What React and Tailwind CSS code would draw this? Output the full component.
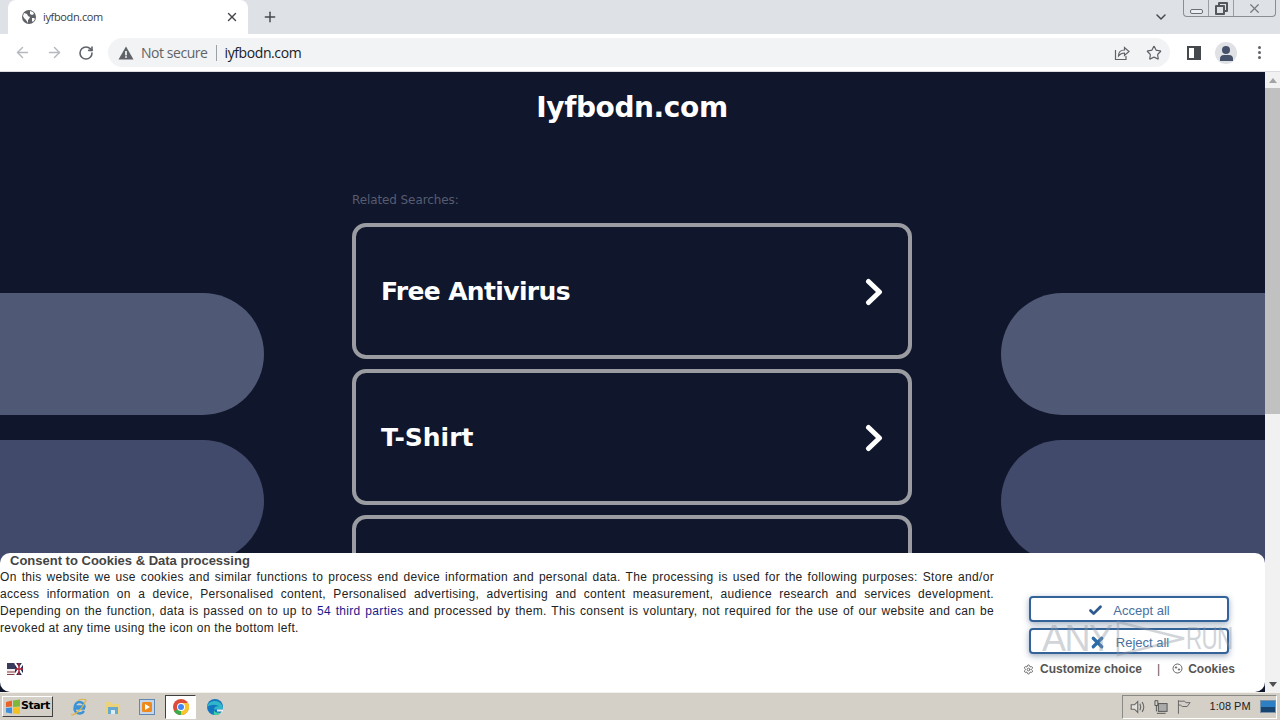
import React from 'react';
import { ArrowLeft, ArrowRight, RotateCw, X, Plus, ChevronDown, Star, Check, Settings } from 'lucide-react';

const uiFont = 'font-["Open_Sans",sans-serif]';
const verdana = 'font-["DejaVu_Sans",sans-serif]';

const Globe = () => (
  <svg width="16" height="16" viewBox="0 0 16 16" className="shrink-0">
    <circle cx="8" cy="8" r="7" fill="#5f6368" />
    <path d="M3 4l3 1 1 2 2 1-1 2-1 1v3l-2-3-2-2-1-2zM9 2l3 1 1 2-2 1-2-1zM11 9l2 0 1 1-2 3-1-1z" fill="#fff" />
  </svg>
);

const Warning = () => (
  <svg width="16" height="14" viewBox="0 0 16 14">
    <path d="M8 0.5L15.5 13.5H0.5Z" fill="#5f6368" />
    <rect x="7.2" y="5" width="1.6" height="4.4" fill="#fff" />
    <rect x="7.2" y="10.2" width="1.6" height="1.6" fill="#fff" />
  </svg>
);

const ShareIcon = () => (
  <svg width="16" height="16" viewBox="0 0 16 16" fill="none" stroke="#5f6368" strokeWidth="1.2">
    <path d="M1.500 5v9.500h10.500V11" />
    <path d="M4.500 11c0-4 2.500-6 6-6V2.500L15 6.500l-4.500 4V8c-3 0-4.500 1-6 3z" />
  </svg>
);

const TabBarRow = () => (
  <div className="h-[34px] bg-[#dee1e6] flex items-end pl-2 shrink-0">
    <div className={`w-[240px] h-[34px] bg-white rounded-t-lg flex items-center pl-[13px] pr-[9px] ${uiFont}`}>
      <Globe />
      <span className="ml-[6px] text-[11px] tracking-[-0.35px] text-[#3c4043] flex-1">iyfbodn.com</span>
      <X size={14} strokeWidth={2.4} color="#45484c" />
    </div>
    <div className="ml-[14px] h-[34px] flex items-center">
      <Plus size={16} strokeWidth={2.2} color="#45484c" />
    </div>
    <div className="ml-auto self-start flex items-center pt-[9px] pr-[14px]">
      <ChevronDown size={16} strokeWidth={2.2} color="#45484c" />
    </div>
    <div className="self-start flex w-[93px] h-[17px] mr-[4px] border border-t-0 border-[#8a8d92] rounded-b-[4px]">
      <div className="w-[25px] flex items-center justify-center border-r border-[#9a9da2]">
        <div className="w-[13px] h-[5px] mt-[6px] border border-[#6b6e73] rounded-[2px] bg-[#eceef1]" />
      </div>
      <div className="w-[25px] flex items-center justify-center border-r border-[#9a9da2]">
        <div className="relative w-[13px] h-[13px]">
          <div className="w-[10px] h-[10px] border-2 border-[#55585c] rounded-[1px] ml-[3px]" />
          <div className="absolute left-0 bottom-0 w-[10px] h-[10px] border-2 border-[#55585c] rounded-[1px] bg-[#dee1e6]" />
        </div>
      </div>
      <div className="flex-1 flex items-center justify-center">
        <X size={15} strokeWidth={2} color="#77797e" />
      </div>
    </div>
  </div>
);

const Toolbar = () => (
  <div className={`h-[38px] bg-white border-b border-[#dadce0] flex items-center shrink-0 ${uiFont}`}>
    <div className="w-[108px] flex items-center pl-[14px] gap-[15px]">
      <ArrowLeft size={17} color="#b5b8bc" strokeWidth={2} />
      <ArrowRight size={17} color="#b5b8bc" strokeWidth={2} />
      <RotateCw size={16} color="#5f6368" strokeWidth={2.4} />
    </div>
    <div className="w-[1062px] h-[29px] bg-[#f1f3f4] rounded-full flex items-center pl-[10px] pr-[8px]">
      <Warning />
      <span className="ml-[7px] text-[14px] tracking-[-0.45px] text-[#5f6368]">Not secure</span>
      <span className="mx-[8px] w-px h-[16px] bg-[#9aa0a6]" />
      <span className="text-[14px] tracking-[-0.4px] text-[#202124]">iyfbodn.com</span>
      <div className="ml-auto flex items-center gap-[16px]">
        <ShareIcon />
        <Star size={16} color="#5f6368" strokeWidth={1.8} />
      </div>
    </div>
    <div className="flex-1 flex items-center pl-[17px]">
      <div className="w-[14px] h-[14px] border-2 border-[#45484c] flex justify-end">
        <div className="w-[5px] h-full bg-[#45484c]" />
      </div>
      <div className="ml-[14px] w-[22px] h-[22px] rounded-full bg-[#dfe1e5] flex flex-col items-center justify-end overflow-hidden">
        <div className="w-[8px] h-[8px] rounded-full bg-[#45506a]" />
        <div className="w-[13px] h-[6px] mb-[3px] mt-[1px] rounded-t-[4px] bg-[#45506a]" />
      </div>
      <div className="ml-[21px] flex flex-col gap-[2px]">
        <div className="w-[3px] h-[3px] rounded-full bg-[#5f6368]" />
        <div className="w-[3px] h-[3px] rounded-full bg-[#5f6368]" />
        <div className="w-[3px] h-[3px] rounded-full bg-[#5f6368]" />
      </div>
    </div>
  </div>
);

const Pills = ({ side }) => (
  <div className={`w-[264px] pt-[221px] flex flex-col gap-[25px] shrink-0 ${side === 'left' ? '' : 'ml-auto'}`}>
    <div className={`h-[122px] bg-[#4f5875] ${side === 'left' ? 'rounded-r-[61px]' : 'rounded-l-[61px]'}`} />
    <div className={`h-[122px] bg-[#424a6b] ${side === 'left' ? 'rounded-r-[61px]' : 'rounded-l-[61px]'}`} />
  </div>
);

const SearchCard = ({ label, tight }) => (
  <div className="h-[136px] shrink-0 border-4 border-[#9b9ca2] rounded-[14px] flex items-center justify-between pt-[2px] pl-[25px] pr-[24px]">
    <span className={`text-[25px] font-bold text-white ${verdana} ${tight ? 'tracking-[-0.65px]' : ''}`}>{label}</span>
    <svg width="20" height="28" viewBox="0 0 20 28" fill="none" stroke="#fff" strokeWidth="5" strokeLinecap="round" strokeLinejoin="round">
      <path d="M4.500 3.500L15.500 14L4.500 24.500" />
    </svg>
  </div>
);

const ParkedPage = () => (
  <div className="flex-1 flex bg-[#10162b] overflow-hidden">
    <Pills side="left" />
    <div className={`w-[560px] ml-[88px] flex flex-col shrink-0 ${verdana}`}>
      <h1 className="text-[28px] tracking-[-0.4px] font-bold text-white text-center leading-[34px] mt-[19px]">Iyfbodn.com</h1>
      <p className="text-[12px] tracking-[-0.1px] text-[#565c71] mt-[67px] leading-[16px]">Related Searches:</p>
      <div className="flex flex-col gap-[10px] mt-[15px]">
        <SearchCard label="Free Antivirus" tight />
        <SearchCard label="T-Shirt" />
        {/* third result sits behind the consent bar */}
        <div className="h-[136px] shrink-0 border-4 border-[#9b9ca2] rounded-[14px]" />
      </div>
    </div>
    <Pills side="right" />
  </div>
);

const Scrollbar = () => (
  <div className="w-[15px] bg-[#f1f1f1] flex flex-col items-center shrink-0">
    <div className="h-[16px] flex items-center justify-center">
      <div className="w-0 h-0 border-x-[4px] border-x-transparent border-b-[5px] border-b-[#a3a3a3]" />
    </div>
    <div className="w-full h-[326px] bg-[#c1c1c1]" />
    <div className="mt-auto h-[16px] flex items-center justify-center">
      <div className="w-0 h-0 border-x-[4px] border-x-transparent border-t-[5px] border-t-[#505050]" />
    </div>
  </div>
);

const ConsentButton = ({ icon, label }) => (
  <div className="w-[200px] h-[26px] bg-white border-2 border-[#34639a] rounded-[4px] shadow-[0_2px_6px_rgba(40,70,110,0.45)] flex items-center justify-center gap-[10px] pt-[3px] text-[13px] text-[#47709f]">
    {icon}
    <span>{label}</span>
  </div>
);

const ConsentBar = () => (
  <div className={`absolute left-0 right-0 bottom-0 h-[139px] bg-white rounded-[10px] flex font-["Liberation_Sans",sans-serif]`}>
    <div className="w-[994px] shrink-0 flex flex-col">
      <h2 className="pl-[10px] -mt-[1px] text-[13px] font-bold text-[#444] leading-[17px]">Consent to Cookies &amp; Data processing</h2>
      <p className="text-[12px] text-[#222] leading-[17px] text-justify tracking-[0.32px]">
        On this website we use cookies and similar functions to process end device information and personal data. The processing is used for the following purposes: Store and/or access information on a device, Personalised content, Personalised advertising, advertising and content measurement, audience research and services development. Depending on the function, data is passed on to up to <span className="text-[#1a1a8c]">54 third parties</span> and processed by them. This consent is voluntary, not required for the use of our website and can be revoked at any time using the icon on the bottom left.
      </p>
      <svg width="16" height="12" viewBox="0 0 16 12" className="ml-[7px] mt-[26px]">
        <rect width="8" height="12" fill="#f0eeee" />
        <path d="M0 1h8M0 5h8M0 9h8M0 11.500h8" stroke="#8c3a44" strokeWidth="1.200" />
        <rect width="8" height="6" fill="#3a3a5c" />
        <rect x="8" width="8" height="12" fill="#1d2a55" />
        <path d="M8 0l8 12M16 0l-8 12" stroke="#fff" strokeWidth="2" />
        <path d="M12 0v12M8 6h8" stroke="#b8283c" strokeWidth="1.500" />
      </svg>
    </div>
    <div className="flex-1 flex flex-col pl-[35px] pt-[43px] gap-[6px]">
      <ConsentButton icon={<Check size={15} strokeWidth={4.5} color="#2c5a8f" />} label="Accept all" />
      <ConsentButton icon={<X size={17} strokeWidth={4.5} color="#2c6aa8" />} label="Reject all" />
      <div className="flex items-center text-[12px] font-bold text-[#555] -ml-[6px]">
        <Settings size={11} color="#666" />
        <span className="ml-[6px]">Customize choice</span>
        <span className="ml-[15px] font-normal">|</span>
        <svg width="11" height="11" viewBox="0 0 11 11" fill="none" stroke="#666" className="ml-[12px] -mt-[2px]">
          <circle cx="5.500" cy="5.500" r="4.500" />
          <circle cx="4" cy="4.500" r="0.700" fill="#666" />
          <circle cx="7" cy="6.500" r="0.700" fill="#666" />
        </svg>
        <span className="ml-[5px]">Cookies</span>
      </div>
    </div>
  </div>
);

// watermark stamped over the consent buttons
const Watermark = () => (
  <div className="absolute left-[1042px] top-[620px] w-[188px] h-[37px] flex items-center pointer-events-none font-['Liberation_Sans',sans-serif] text-[#8d95a0] opacity-40">
    <span className="text-[36px] leading-[37px] tracking-[-1.5px]">ANY</span>
    <svg width="70" height="37" viewBox="0 0 70 37" fill="none" stroke="#8d95a0" strokeWidth="2.500" className="ml-[4px] shrink-0">
      <path d="M2 2L68 18.500L2 35Z" />
    </svg>
    <span className="text-[32px] leading-[37px] tracking-[-1px] origin-left scale-x-70">RUN</span>
  </div>
);

const Taskbar = () => (
  <div className="h-[28px] bg-[#d4d0c8] border-t border-[#f4f2ec] flex items-center shrink-0 pl-[2px] font-['Liberation_Sans',sans-serif]">
    <div className="w-[51px] h-[21px] bg-[#d4d0c8] border border-t-white border-l-white border-r-[#404040] border-b-[#404040] flex items-center pl-[2px]">
      <svg width="16" height="16" viewBox="0 0 16 16" className="shrink-0">
        <path d="M1 3l6-1.500v6L1 8z" fill="#e8622a" />
        <path d="M8 1.500l7-1v7l-7 .5z" fill="#7db83c" />
        <path d="M1 9l6-.5v6L1 13.500z" fill="#3d8fdc" />
        <path d="M8 8.500l7-.5v7l-7-.5z" fill="#f3c221" />
      </svg>
      <span className="text-[11px] font-bold text-black font-['DejaVu_Sans',sans-serif] tracking-[-0.5px]">Start</span>
    </div>
    <div className="flex items-center ml-[16px] gap-[14px]">
      <svg width="20" height="20" viewBox="0 0 20 20" fill="none">
        <path d="M16 11.500H5.500C5.500 7 8 5 10.500 5S15.500 7 15.500 9.500H7M5.500 11.500C5.500 15 8 16.500 10.500 16.500c2 0 3.500-1 4.500-2.500" stroke="#3b93d6" strokeWidth="2.400" />
        <path d="M2 17.500c2.500 1.500 11-4 15-14.500-3-1.500-6-.5-8 .5" stroke="#d9b44a" strokeWidth="1.200" />
      </svg>
      <svg width="20" height="20" viewBox="0 0 20 20">
        <path d="M3 5h5l2 2h7v10H3z" fill="#ecd27a" />
        <rect x="5" y="10" width="10" height="7" fill="#6aa9cf" />
        <rect x="8" y="13" width="4" height="4" fill="#dcecf5" />
      </svg>
      <svg width="20" height="20" viewBox="0 0 20 20">
        <rect x="2.500" y="2.500" width="15" height="15" fill="#c5d6e8" stroke="#5f88b5" />
        <rect x="5" y="5" width="10" height="10" rx="1.500" fill="#ee8a1d" />
        <path d="M8 7l5 3-5 3z" fill="#fff" />
      </svg>
      <div className="w-[31px] h-[24px] -ml-[6px] bg-white border border-t-[#404040] border-l-[#404040] border-r-white border-b-white flex items-center justify-center">
        <svg width="18" height="18" viewBox="0 0 18 18">
          <circle cx="9" cy="9" r="8" fill="#dd4b39" />
          <path d="M9 9L2 13.200A8 8 0 0 0 9 17z" fill="#3cab4a" />
          <path d="M9 5h7a8 8 0 0 1-7 12z" fill="#f8c52c" />
          <circle cx="9" cy="9" r="4" fill="#fff" />
          <circle cx="9" cy="9" r="3" fill="#4285f4" />
        </svg>
      </div>
      <svg width="18" height="18" viewBox="0 0 18 18" className="-ml-[4px]">
        <circle cx="9" cy="9" r="8" fill="#1276c0" />
        <path d="M1 9c1-4 4-6 8-6 3 0 5 1 7 4l1 3c0 1-2 1.500-4 1.500H8c0-3 3-4 5-3-2-2-7-3-12 .5z" fill="#2fb6c9" />
        <path d="M8 12c0 2 3 3.500 7 2.500-1.500 2-3.500 2.500-5.500 2.500C7 17 8 14 8 12z" fill="#3ed0a0" />
        <path d="M11 11.500h6v2h-6z" fill="#e8f2f5" />
      </svg>
    </div>
    <div className="ml-auto mr-[3px] w-[155px] h-[24px] border border-t-[#8a8a84] border-l-[#8a8a84] border-r-white border-b-white flex items-center pl-[6px]">
      <svg width="18" height="18" viewBox="0 0 16 16" fill="none" stroke="#666" strokeWidth="1">
        <path d="M2 6h3l3-3v10l-3-3H2z" fill="#e4e2dc" />
        <path d="M10 5c1 2 1 4 0 6M12 3.500c2 3 2 6 0 9" />
      </svg>
      <svg width="16" height="16" viewBox="0 0 16 16" className="ml-[6px]" fill="none" stroke="#555">
        <rect x="5.500" y="4.500" width="9" height="8" fill="#aaa" />
        <path d="M2 1.500h3v5H2zM3.500 6.500v6" />
        <path d="M4 14.500h9" />
      </svg>
      <svg width="16" height="16" viewBox="0 0 16 16" className="ml-[8px]" fill="none" stroke="#666">
        <path d="M2.500 1v14M2.500 2h6l2 1.500h4l-3 4h-5l-2-1.500h-2" />
      </svg>
      <span className="ml-[18px] text-[11px] text-[#222] w-[43px] whitespace-nowrap">1:08 PM</span>
      <div className="ml-[9px] w-[16px] h-[13px] bg-[#2f7fc4] border border-[#7a93a8]">
        <div className="w-full h-[5px] mt-[6px] bg-[#17456f]" />
      </div>
    </div>
  </div>
);

export default function App() {
  return (
    <div className="w-[1280px] h-[720px] flex flex-col overflow-hidden relative">
      <TabBarRow />
      <Toolbar />
      <div className="flex-1 flex min-h-0">
        <div className="flex-1 flex flex-col relative min-w-0">
          <ParkedPage />
          <ConsentBar />
        </div>
        <Scrollbar />
      </div>
      <Taskbar />
      <Watermark />
    </div>
  );
}
